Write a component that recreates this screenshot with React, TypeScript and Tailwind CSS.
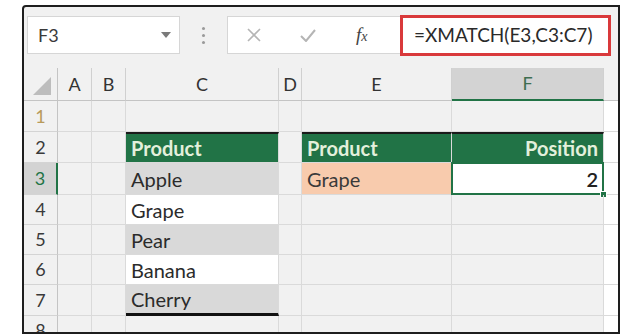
import React from "react";

const font = { fontFamily: "Lato, 'Open Sans', sans-serif" };

const cols = ["A", "B", "C", "D", "E", "F"];
const rowHeights = ["h-[31px]", "h-[31px]", "h-[32px]", "h-[30px]", "h-[30px]", "h-[30px]", "h-[31px]", "h-[30px]"];

type Cell = { text?: string; cls?: string; align?: "left" | "right" };

function cellFor(row: number, col: string): Cell {
  const green = "bg-[#217346] text-[#e3f0dc] font-bold border-t-2 border-t-[#1a1a1a]";
  if (col === "C") {
    if (row === 2) return { text: "Product", cls: green };
    const items: Record<number, string> = { 3: "Apple", 4: "Grape", 5: "Pear", 6: "Banana", 7: "Cherry" };
    if (items[row]) {
      const shade = row % 2 === 1 ? "bg-[#d9d9d9] text-[#2b2b2b]" : "bg-white text-[#2b2b2b]";
      return { text: items[row], cls: shade + (row === 7 ? " border-b-[3px] border-b-[#111]" : "") };
    }
  }
  if (col === "E") {
    if (row === 2) return { text: "Product", cls: green };
    if (row === 3) return { text: "Grape", cls: "bg-[#f8cbad] text-[#3a3a3a]" };
  }
  if (col === "F") {
    if (row === 2) return { text: "Position", cls: green, align: "right" };
    if (row === 3) return { text: "2", cls: "bg-white text-[#222] font-semibold", align: "right" };
  }
  return {};
}

export default function App() {
  return (
    <div className="w-[640px] h-[334px] bg-white overflow-hidden" style={font}>
      <div className="ml-[22px] mt-[5px] w-[598px] h-[329px] border-2 border-[#1e1e1e] rounded-tl-[4px] bg-[#f1f1f1] overflow-hidden flex flex-col">
        {/* toolbar */}
        <div className="flex items-center h-[48px] pt-[8px] pl-[3px] shrink-0">
          <div className="w-[153px] h-[38px] bg-white border border-[#d6d6d6] flex items-center justify-between pl-[10px] pr-[8px]">
            <span className="text-[18px] text-[#3a3a3a]">F3</span>
            <svg width="10" height="6" viewBox="0 0 10 6"><path d="M0 0 L10 0 L5 6 Z" fill="#7a7a7a" /></svg>
          </div>
          <div className="w-[47px] flex flex-col items-center gap-[4px]">
            <span className="w-[3px] h-[3px] rounded-full bg-[#9a9a9a]" />
            <span className="w-[3px] h-[3px] rounded-full bg-[#9a9a9a]" />
            <span className="w-[3px] h-[3px] rounded-full bg-[#9a9a9a]" />
          </div>
          <div className="flex-1 h-[38px] bg-white border border-[#d6d6d6] flex items-center mr-[9px] relative">
            <svg className="ml-[19px]" width="14" height="14" viewBox="0 0 14 14"><path d="M1 1 L13 13 M13 1 L1 13" stroke="#b5b5b5" strokeWidth="1.6" /></svg>
            <svg className="ml-[39px]" width="16" height="13" viewBox="0 0 16 13"><path d="M1 7 L6 12 L15 1" stroke="#b5b5b5" strokeWidth="2" fill="none" /></svg>
            <span className="ml-[40px] text-[19px] italic text-[#444]" style={{ fontFamily: "'Liberation Serif', serif" }}>f<span className="text-[14px]">x</span></span>
            <div className="absolute right-[-3px] top-[-2px] w-[211px] h-[41px] border-[3px] border-[#d9393b] flex items-center pl-[11px]">
              <span className="text-[19px] text-[#2a2a2a] whitespace-nowrap">=XMATCH(E3,C3:C7)</span>
            </div>
          </div>
        </div>
        {/* sheet */}
        <div className="mt-[13px] grid grid-cols-[34px_34px_34px_153px_23px_150px_152px_14px]">
          {/* column headers */}
          <div className="h-[33px] border-r border-b border-[#c4c4c4] flex items-end justify-end pr-[6px] pb-[5px]">
            <svg width="18" height="18" viewBox="0 0 18 18"><path d="M18 0 L18 18 L0 18 Z" fill="#bdbdbd" /></svg>
          </div>
          {cols.map((c) => (
            <div
              key={c}
              className={
                "h-[33px] flex items-center justify-center text-[18px] border-r border-[#d0d0d0] " +
                (c === "F" ? "bg-[#d3d3d3] text-[#3e6e50] border-b-2 border-b-[#217346]" : "text-[#333] border-b border-b-[#c4c4c4]")
              }
            >
              {c}
            </div>
          ))}
          <div className="h-[33px] border-b border-[#c4c4c4]" />
          {/* rows */}
          {rowHeights.map((h, i) => {
            const row = i + 1;
            return (
              <React.Fragment key={row}>
                <div
                  className={
                    h +
                    " flex items-center justify-center text-[18px] border-b border-[#d4d4d4] " +
                    (row === 3
                      ? "bg-[#d3d3d3] text-[#217346] border-r-2 border-r-[#217346]"
                      : "border-r border-r-[#c4c4c4] " + (row === 1 ? "text-[#b89a5a]" : "text-[#3a3a3a]"))
                  }
                >
                  {row}
                </div>
                {cols.map((c) => {
                  const cell = cellFor(row, c);
                  const selected = row === 3 && c === "F";
                  return (
                    <div
                      key={c}
                      className={
                        h +
                        " relative flex items-center text-[20px] px-[5px] border-r border-b border-[#dadada] " +
                        (cell.align === "right" ? "justify-end " : "") +
                        (cell.cls ?? "")
                      }
                    >
                      {cell.text}
                      {selected && (
                        <>
                          <div className="absolute inset-[-1px] border-2 border-[#217346]" />
                          <div className="absolute right-[-4px] bottom-[-4px] w-[7px] h-[7px] bg-[#217346] border border-white" />
                        </>
                      )}
                    </div>
                  );
                })}
                <div className={h + " border-b border-[#dadada] bg-white"} />
              </React.Fragment>
            );
          })}
        </div>
      </div>
    </div>
  );
}
